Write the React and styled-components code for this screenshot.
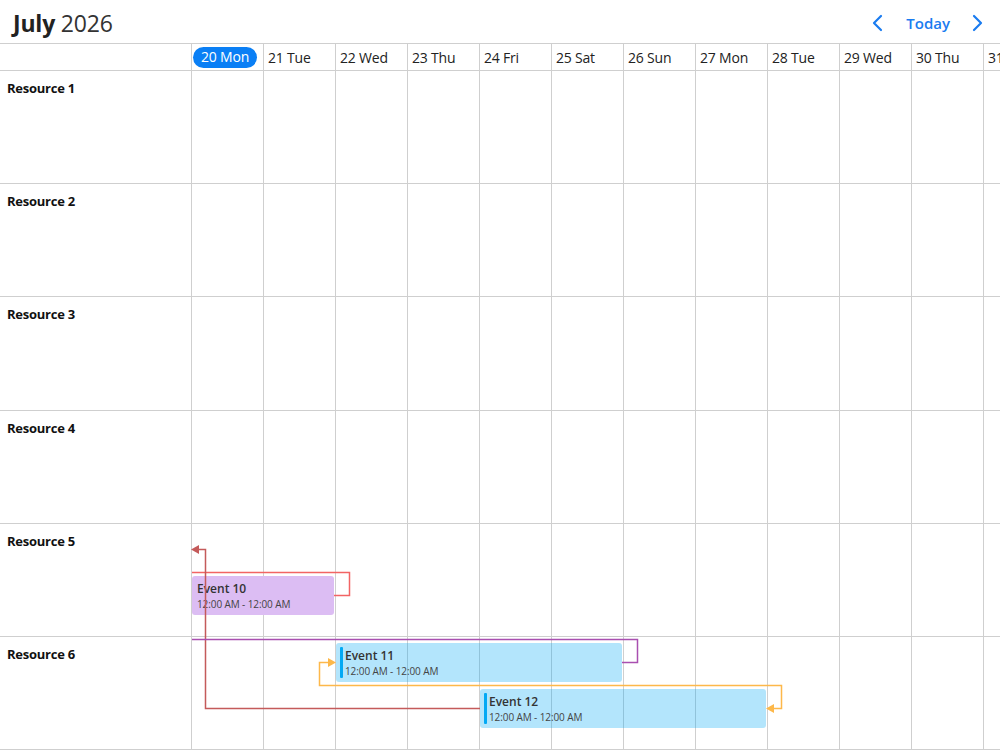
import React from "react";
import styled, { createGlobalStyle } from "styled-components";

const GlobalStyle = createGlobalStyle`
  html, body {
    margin: 0;
    padding: 0;
    background: #fff;
  }
  body {
    font-family: "Segoe UI", "Open Sans", "Noto Sans", sans-serif;
    color: #222;
  }
`;

const DAY_W = 72;
const LABEL_W = 191;
const ROW_H = 113.2;

const days = [
  "20 Mon",
  "21 Tue",
  "22 Wed",
  "23 Thu",
  "24 Fri",
  "25 Sat",
  "26 Sun",
  "27 Mon",
  "28 Tue",
  "29 Wed",
  "30 Thu",
  "31 Fri",
];

const resources = [
  "Resource 1",
  "Resource 2",
  "Resource 3",
  "Resource 4",
  "Resource 5",
  "Resource 6",
];

const events = {
  "Resource 5": [
    { title: "Event 10", start: 0, len: 2, top: 52, kind: "purple" },
  ],
  "Resource 6": [
    { title: "Event 11", start: 2, len: 4, top: 6, kind: "blue" },
    { title: "Event 12", start: 4, len: 4, top: 52, kind: "blue" },
  ],
};

const Page = styled.div`
  position: relative;
  width: 1000px;
  height: 750px;
  overflow: hidden;
`;

const Toolbar = styled.div`
  height: 44px;
  border-bottom: 1px solid #cfcfcf;
  display: flex;
  align-items: center;
  justify-content: space-between;
  padding: 2px 13px 0;
  box-sizing: border-box;
`;

const Title = styled.div`
  font-size: 23px;
  color: #222;
  letter-spacing: -0.2px;

  b {
    font-weight: 700;
  }

  span {
    font-weight: 400;
    color: #333;
  }
`;

const Nav = styled.div`
  display: flex;
  align-items: center;
  margin-right: -5px;
  color: #1a7cf0;
`;

const NavButton = styled.button`
  border: none;
  background: none;
  padding: 0;
  margin: 0;
  width: 30px;
  height: 30px;
  display: flex;
  align-items: center;
  justify-content: center;
  color: inherit;
  cursor: pointer;
`;

const TodayButton = styled.button`
  border: none;
  background: none;
  padding: 0 12px 0 13px;
  font-family: inherit;
  font-size: 15px;
  font-weight: 600;
  color: inherit;
  cursor: pointer;
`;

const Grid = styled.div`
  display: flex;
  flex-direction: column;
`;

const Row = styled.div`
  display: flex;
  height: ${(p) => p.$h}px;
  border-bottom: 1px solid #cfcfcf;
  box-sizing: border-box;
  flex: none;
`;

const LabelCell = styled.div`
  flex: none;
  border-right: 1px solid #cfcfcf;
  box-sizing: border-box;
  width: ${LABEL_W + 1}px;
  padding: 8px 7px;
  font-size: 13px;
  font-weight: 700;
  letter-spacing: -0.25px;
  color: #111;
`;

const Track = styled.div`
  position: relative;
  display: flex;
  flex: none;
`;

const DayHead = styled.div`
  width: ${DAY_W}px;
  flex: none;
  box-sizing: border-box;
  border-right: 1px solid #cfcfcf;
  display: flex;
  align-items: center;
  padding-left: ${(p) => (p.$today ? 1 : 4)}px;
  font-size: 14px;
  letter-spacing: -0.2px;
  color: #222;
  white-space: nowrap;
`;

const TodayPill = styled.span`
  background: #0a7ff5;
  color: #fff;
  border-radius: 11px;
  padding: 1px 8px 2px;
  line-height: 18px;
`;

const DayCell = styled.div`
  width: ${DAY_W}px;
  flex: none;
  box-sizing: border-box;
  border-right: 1px solid #cfcfcf;
`;

const EventBox = styled.div`
  position: absolute;
  top: ${(p) => p.$top}px;
  left: ${(p) => p.$left}px;
  width: ${(p) => p.$width}px;
  height: 39px;
  border-radius: 3px;
  box-sizing: border-box;
  background: ${(p) =>
    p.$kind === "purple" ? "#dcbdf3" : "rgba(3, 169, 244, 0.3)"};
  padding: ${(p) => (p.$kind === "purple" ? "5px 5px" : "4px 4px")};
  display: flex;
  gap: 2px;
  overflow: hidden;
`;

const EventBar = styled.div`
  width: 3px;
  flex: none;
  background: #03a9f4;
  border-radius: 1px;
`;

const EventText = styled.div`
  display: flex;
  flex-direction: column;
  padding-top: ${(p) => (p.$bar ? 1 : 0)}px;
`;

const EventTitle = styled.div`
  font-size: 12px;
  font-weight: 600;
  color: #333;
  line-height: 16px;
`;

const EventTime = styled.div`
  font-size: 10px;
  color: #444;
  line-height: 14px;
  letter-spacing: -0.1px;
`;

const Links = styled.svg`
  position: absolute;
  left: 0;
  top: 0;
  pointer-events: none;
`;

function ChevronLeft() {
  return (
    <svg width="14" height="18" viewBox="0 0 14 18">
      <path
        d="M10 2 L3 9 L10 16"
        fill="none"
        stroke="currentColor"
        strokeWidth="2.2"
        strokeLinecap="round"
        strokeLinejoin="round"
      />
    </svg>
  );
}

function ChevronRight() {
  return (
    <svg width="14" height="18" viewBox="0 0 14 18">
      <path
        d="M4 2 L11 9 L4 16"
        fill="none"
        stroke="currentColor"
        strokeWidth="2.2"
        strokeLinecap="round"
        strokeLinejoin="round"
      />
    </svg>
  );
}

function Event({ ev }) {
  const bar = ev.kind === "blue";
  return (
    <EventBox
      $top={ev.top}
      $left={ev.start * DAY_W}
      $width={ev.len * DAY_W - 2}
      $kind={ev.kind}
    >
      {bar && <EventBar />}
      <EventText $bar={bar}>
        <EventTitle>{ev.title}</EventTitle>
        <EventTime>12:00 AM - 12:00 AM</EventTime>
      </EventText>
    </EventBox>
  );
}

function Dependencies() {
  return (
    <Links width="1000" height="750" viewBox="0 0 1000 750">
      {/* red: into event 10 from the right */}
      <polyline
        points="192,572.5 349.5,572.5 349.5,595.5 334,595.5"
        fill="none"
        stroke="#f26464"
        strokeWidth="1.5"
      />
      {/* dark red: event 12 back to resource 5 */}
      <polyline
        points="480,708.5 205.5,708.5 205.5,549.5 198,549.5"
        fill="none"
        stroke="#c45a5a"
        strokeWidth="1.5"
      />
      <polygon points="191,549.5 199,545 199,554" fill="#c45a5a" />
      {/* purple: into event 11 from the right */}
      <polyline
        points="192,639.5 637.5,639.5 637.5,662.5 622,662.5"
        fill="none"
        stroke="#a94fb0"
        strokeWidth="1.5"
      />
      {/* orange: event 11 <-> event 12 */}
      <polyline
        points="328,662.5 319.5,662.5 319.5,685.5 781.5,685.5 781.5,708.5 774,708.5"
        fill="none"
        stroke="#fdb84a"
        strokeWidth="1.5"
      />
      <polygon points="336,662.5 328,658 328,667" fill="#fdb84a" />
      <polygon points="766,708.5 774,704 774,713" fill="#fdb84a" />
    </Links>
  );
}

export default function App() {
  return (
    <Page>
      <GlobalStyle />
      <Toolbar>
        <Title>
          <b>July</b> <span>2026</span>
        </Title>
        <Nav>
          <NavButton aria-label="Previous">
            <ChevronLeft />
          </NavButton>
          <TodayButton>Today</TodayButton>
          <NavButton aria-label="Next">
            <ChevronRight />
          </NavButton>
        </Nav>
      </Toolbar>
      <Grid>
        <Row $h={27}>
          <LabelCell />
          <Track>
            {days.map((d, i) => (
              <DayHead key={d} $today={i === 0}>
                {i === 0 ? <TodayPill>{d}</TodayPill> : d}
              </DayHead>
            ))}
          </Track>
        </Row>
        {resources.map((r) => (
          <Row key={r} $h={ROW_H}>
            <LabelCell>{r}</LabelCell>
            <Track>
              {days.map((d) => (
                <DayCell key={d} />
              ))}
              {(events[r] || []).map((ev) => (
                <Event key={ev.title} ev={ev} />
              ))}
            </Track>
          </Row>
        ))}
      </Grid>
      <Dependencies />
    </Page>
  );
}
